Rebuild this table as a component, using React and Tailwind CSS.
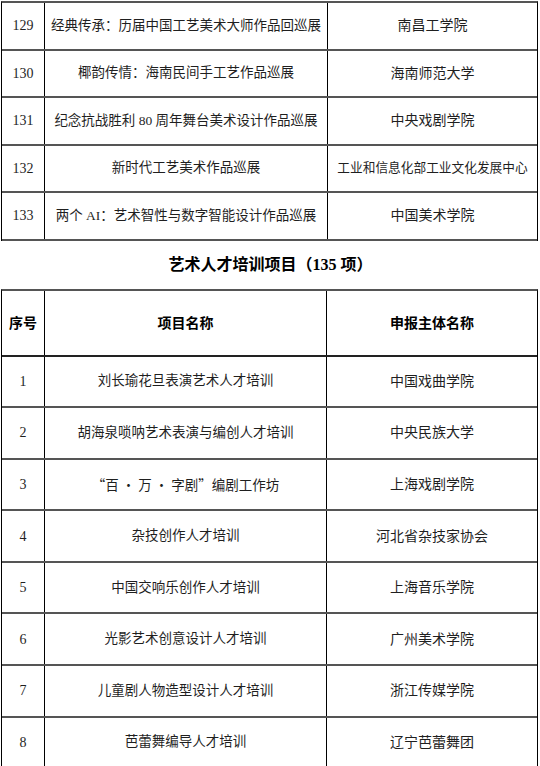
export default function App() {
  const t1 = [
    ["129", "经典传承：历届中国工艺美术大师作品回巡展", "南昌工学院"],
    ["130", "椰韵传情：海南民间手工艺作品巡展", "海南师范大学"],
    ["131", "纪念抗战胜利 80 周年舞台美术设计作品巡展", "中央戏剧学院"],
    ["132", "新时代工艺美术作品巡展", "工业和信息化部工业文化发展中心"],
    ["133", "两个 AI：艺术智性与数字智能设计作品巡展", "中国美术学院"],
  ];
  const t2 = [
    ["1", "刘长瑜花旦表演艺术人才培训", "中国戏曲学院"],
    ["2", "胡海泉唢呐艺术表演与编创人才培训", "中央民族大学"],
    ["3", null, "上海戏剧学院"],
    ["4", "杂技创作人才培训", "河北省杂技家协会"],
    ["5", "中国交响乐创作人才培训", "上海音乐学院"],
    ["6", "光影艺术创意设计人才培训", "广州美术学院"],
    ["7", "儿童剧人物造型设计人才培训", "浙江传媒学院"],
    ["8", "芭蕾舞编导人才培训", "辽宁芭蕾舞团"],
  ];
  const serif = { fontFamily: '"Liberation Serif", "Noto Sans CJK SC", serif' };
  const cjk = { fontFamily: '"Noto Sans CJK SC", sans-serif' };
  return (
    <div className="w-[540px] h-[766px] bg-white overflow-hidden text-[#1f1f1f]" style={serif}>
      <div className="pt-[1px] pl-[1px]">
        <div className="w-[537px] border-t-2 border-[#555] border-l border-r border-l-black border-r-black">
          {t1.map((r, i) => (
            <div key={i} className="flex h-[47.5px] border-b-2 border-[#555]">
              <div className="w-[43px] shrink-0 border-r border-black flex items-center justify-center text-[14px]">{r[0]}</div>
              <div className="w-[283px] shrink-0 border-r border-black flex items-center justify-center text-[13.5px] whitespace-nowrap">{r[1]}</div>
              <div className={"flex-1 flex items-center justify-center whitespace-nowrap " + (r[2].length > 10 ? "text-[12.7px]" : "text-[14px]")}>{r[2]}</div>
            </div>
          ))}
        </div>
        <div className="h-[48px] flex items-center justify-center text-[16px] font-bold text-black">
          艺术人才培训项目（135 项）
        </div>
        <div className="w-[537px] border-t-2 border-[#555] border-l border-r border-l-black border-r-black">
          <div className="flex h-[66px] border-b-2 border-[#222] font-bold text-[14px] text-black" style={cjk}>
            <div className="w-[43px] shrink-0 border-r border-black flex items-center justify-center">序号</div>
            <div className="w-[282px] shrink-0 border-r border-black flex items-center justify-center">项目名称</div>
            <div className="flex-1 flex items-center justify-center">申报主体名称</div>
          </div>
          {t2.map((r, i) => (
            <div key={i} className="flex h-[51.6px] border-b-2 border-[#555]">
              <div className="w-[43px] shrink-0 border-r border-black flex items-center justify-center text-[14px]">{r[0]}</div>
              <div className="w-[282px] shrink-0 border-r border-black flex items-center justify-center text-[13.5px] whitespace-nowrap">
                {r[1] === null ? (
                  <span style={cjk}>“百 • 万 • 字剧”编剧工作坊</span>
                ) : (
                  r[1]
                )}
              </div>
              <div className="flex-1 flex items-center justify-center text-[14px] whitespace-nowrap">{r[2]}</div>
            </div>
          ))}
        </div>
      </div>
    </div>
  );
}
